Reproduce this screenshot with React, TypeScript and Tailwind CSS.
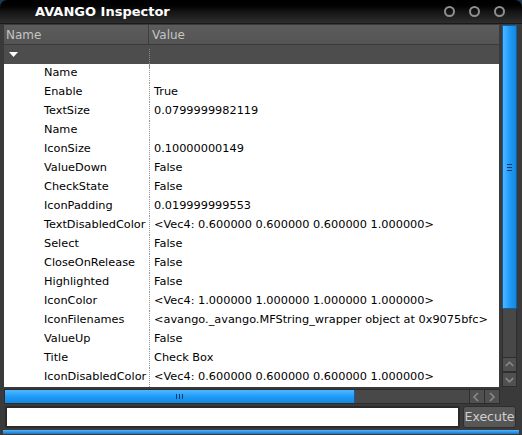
const rows: [string, string][] = [
  ['Name', ''],
  ['Enable', 'True'],
  ['TextSize', '0.0799999982119'],
  ['Name', ''],
  ['IconSize', '0.10000000149'],
  ['ValueDown', 'False'],
  ['CheckState', 'False'],
  ['IconPadding', '0.019999999553'],
  ['TextDisabledColor', '<Vec4: 0.600000 0.600000 0.600000 1.000000>'],
  ['Select', 'False'],
  ['CloseOnRelease', 'False'],
  ['Highlighted', 'False'],
  ['IconColor', '<Vec4: 1.000000 1.000000 1.000000 1.000000>'],
  ['IconFilenames', '<avango._avango.MFString_wrapper object at 0x9075bfc>'],
  ['ValueUp', 'False'],
  ['Title', 'Check Box'],
  ['IconDisabledColor', '<Vec4: 0.600000 0.600000 0.600000 1.000000>'],
]

function Chevron({ dir }: { dir: 'up' | 'down' | 'left' | 'right' }) {
  const d = {
    up: 'M3 8 L7 4 L11 8',
    down: 'M3 5 L7 9 L11 5',
    left: 'M8 3 L4 7 L8 11',
    right: 'M5 3 L9 7 L5 11',
  }[dir]
  return (
    <svg width="14" height="14" viewBox="0 0 14 14">
      <path d={d} fill="none" stroke="#8a8a8a" strokeWidth="1.6" />
    </svg>
  )
}

export default function App() {
  return (
    <div
      className="w-[522px] h-[435px] bg-[#1d3a55] overflow-hidden"
      style={{ fontFamily: '"DejaVu Sans", "Liberation Sans", sans-serif' }}
    >
      <div className="w-full h-full flex flex-col bg-[#3a3a3a] rounded-t-[7px] overflow-hidden">
        {/* title bar */}
        <div className="h-[24px] shrink-0 flex items-center bg-gradient-to-b from-[#000000] via-[#141414] to-[#2e2e2e] border-b border-[#1a1a1a]">
          <span className="pl-[35px] text-white font-bold text-[13px] leading-none">AVANGO Inspector</span>
          <div className="ml-auto flex gap-[14px] pr-[17px]">
            {[0, 1, 2].map(i => (
              <div key={i} className="w-[11px] h-[11px] rounded-full border-2 border-[#8f8f8f]" />
            ))}
          </div>
        </div>

        {/* tree + vertical scrollbar */}
        <div className="flex pl-[4px] pr-[5px] pt-[1px] gap-[3px]">
          <div className="w-[496px] flex flex-col">
            <div className="h-[19px] flex bg-gradient-to-b from-[#5c5c5c] to-[#545454] text-[#c4c4c4] text-[12px]">
              <div className="w-[145px] border-r border-[#3e3e3e] flex items-center pl-[2px]">Name</div>
              <div className="flex items-center pl-[3px]">Value</div>
            </div>
            <div className="h-px bg-[#3a3a3a]" />
            <div className="h-[19px] flex bg-[#4d4d4d] relative">
              <div className="w-[145px] flex items-center pl-[5px]">
                <svg width="9" height="6" viewBox="0 0 9 6">
                  <path d="M0 0 L9 0 L4.5 5 Z" fill="#ffffff" />
                </svg>
              </div>
              <div className="border-l border-dotted border-[#888] h-full mt-[4px]" />
            </div>
            <div className="bg-white text-[11.3px] text-black">
              {rows.map(([name, value], i) => (
                <div key={i} className="h-[19px] flex items-center">
                  <div className="w-[145px] pl-[40px] whitespace-nowrap">{name}</div>
                  <div className="self-stretch border-l border-dotted border-[#999]" />
                  <div className="pl-[4px] whitespace-nowrap">{value}</div>
                </div>
              ))}
            </div>
          </div>

          {/* vertical scrollbar */}
          <div className="w-[15px] h-[362px] flex flex-col bg-[#2c2c2c]">
            <div className="h-[284px] bg-gradient-to-r from-[#4fb6ff] via-[#1e9cf8] to-[#1587e0] border border-[#0d5fa0] flex items-center justify-center">
              <div className="flex flex-col gap-[2px]">
                <div className="w-[5px] h-px bg-[#0b3a66]" />
                <div className="w-[5px] h-px bg-[#0b3a66]" />
                <div className="w-[5px] h-px bg-[#0b3a66]" />
              </div>
            </div>
            <div className="flex-1 bg-[#484848] border-x border-[#2e2e2e]" />
            <div className="h-[15px] bg-[#505050] border border-[#2e2e2e] flex items-center justify-center">
              <Chevron dir="up" />
            </div>
            <div className="h-[15px] bg-[#505050] border border-[#2e2e2e] flex items-center justify-center">
              <Chevron dir="down" />
            </div>
          </div>
        </div>

        {/* horizontal scrollbar */}
        <div className="pl-[4px] pt-[2px]">
          <div className="w-[496px] h-[15px] flex bg-[#484848] border border-[#2c2c2c]">
            <div className="w-[350px] bg-gradient-to-b from-[#4fb6ff] via-[#1e9cf8] to-[#1587e0] border-r border-[#0d5fa0] flex items-center justify-center">
              <div className="flex gap-[2px]">
                <div className="w-px h-[5px] bg-[#0b3a66]" />
                <div className="w-px h-[5px] bg-[#0b3a66]" />
                <div className="w-px h-[5px] bg-[#0b3a66]" />
              </div>
            </div>
            <div className="flex-1" />
            <div className="w-[15px] bg-[#505050] border-l border-[#2e2e2e] flex items-center justify-center">
              <Chevron dir="left" />
            </div>
            <div className="w-[15px] bg-[#505050] border-l border-[#2e2e2e] flex items-center justify-center">
              <Chevron dir="right" />
            </div>
          </div>
        </div>

        {/* command line */}
        <div className="flex items-center pl-[5px] pr-[6px] pt-[2px] gap-[3px]">
          <input className="w-[455px] h-[22px] bg-white border-2 border-[#2a2a2a] rounded-[2px] outline-none" />
          <button className="w-[53px] h-[22px] bg-[#575757] border border-[#2e2e2e] rounded-[3px] text-[#cfcfcf] text-[12.5px]">
            Execute
          </button>
        </div>

        <div className="mt-[2px] mx-[3px] h-[4px] bg-gradient-to-b from-[#4fb6ff] to-[#1376c6]" />
      </div>
    </div>
  )
}
